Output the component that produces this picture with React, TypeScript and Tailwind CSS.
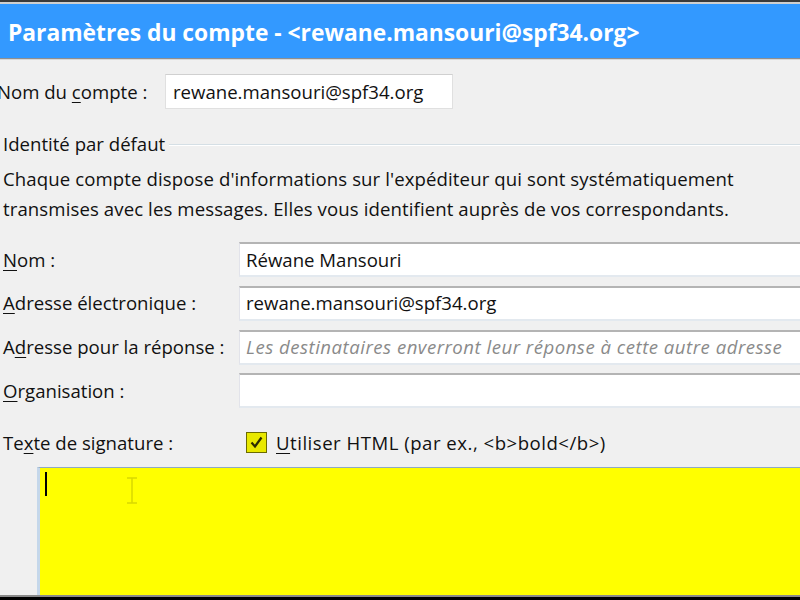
import React from "react";

const font = { fontFamily: '"Open Sans", "Noto Sans", "DejaVu Sans", sans-serif' };

function Field({ value, placeholder }: { value?: string; placeholder?: string }) {
  return (
    <div className="h-[35px] flex-1 bg-white border-t-2 border-t-[#b4b4b4] border-l border-l-[#e2e3ea] border-b-2 border-b-[#e3e9ef] flex items-center pl-[6px] overflow-hidden whitespace-nowrap">
      {value ? (
        <span className="text-[18.6px] text-[#111]">{value}</span>
      ) : (
        <span className="text-[18.6px] italic text-[#8a8a8a] tracking-[0.5px]">{placeholder}</span>
      )}
    </div>
  );
}

function Row({ u, rest, pre = "", children }: { u: string; rest: string; pre?: string; children: React.ReactNode }) {
  return (
    <div className="flex items-center h-[43.67px]">
      <div className="w-[239px] shrink-0 pl-[3px] text-[18.6px] text-[#111] whitespace-nowrap">
        {pre}
        <span className="underline underline-offset-[3px]">{u}</span>
        {rest}
      </div>
      {children}
    </div>
  );
}

export default function App() {
  return (
    <div className="w-[800px] h-[600px] overflow-hidden bg-[#f0f0f0] flex flex-col" style={font}>
      {/* window frame top edge */}
      <div className="h-[2px] bg-[#3a3a3a] shrink-0" />
      <div className="h-[2px] bg-[#cfcfcf] shrink-0" />
      {/* title bar */}
      <div className="h-[54px] bg-[#3399ff] shrink-0 flex items-center pl-[8px] pt-[4px]">
        <span className="text-white font-bold text-[22.8px] whitespace-nowrap">
          Paramètres du compte - &lt;rewane.mansouri@spf34.org&gt;
        </span>
      </div>
      <div className="h-[1px] bg-[#8f8f8f] shrink-0" />
      <div className="h-[1px] bg-[#d8d8d8] shrink-0" />

      {/* account name */}
      <div className="flex items-center mt-[14px] h-[35px] shrink-0">
        <div className="w-[168px] shrink-0 -ml-[3px] text-[18.6px] text-[#111] whitespace-nowrap">
          Nom du <span className="underline underline-offset-[3px]">c</span>ompte :
        </div>
        <div className="w-[288px] h-[35px] bg-white border border-[#e0e0e0] border-t-[#d0d0d0] flex items-center pl-[7px] text-[18.6px] text-[#111] whitespace-nowrap">
          rewane.mansouri@spf34.org
        </div>
      </div>

      {/* default identity group */}
      <div className="flex items-center mt-[21px] shrink-0">
        <span className="pl-[3px] text-[18.6px] text-[#111] whitespace-nowrap">Identité par défaut</span>
        <div className="flex-1 ml-[4px] mt-[2px] flex flex-col">
          <div className="h-[1px] bg-[#d5dfe5]" />
          <div className="h-[1px] bg-white" />
        </div>
      </div>
      <div className="pl-[3px] mt-[6px] text-[18.6px] leading-[30px] text-[#111] whitespace-nowrap shrink-0 tracking-[0.1px]">
        <div>Chaque compte dispose d'informations sur l'expéditeur qui sont systématiquement</div>
        <div>transmises avec les messages. Elles vous identifient auprès de vos correspondants.</div>
      </div>

      <div className="mt-[14px] flex flex-col shrink-0">
        <Row u="N" rest="om :">
          <Field value="Réwane Mansouri" />
        </Row>
        <Row u="A" rest="dresse électronique :">
          <Field value="rewane.mansouri@spf34.org" />
        </Row>
        <Row pre="A" u="d" rest="resse pour la réponse :">
          <Field placeholder="Les destinataires enverront leur réponse à cette autre adresse" />
        </Row>
        <Row u="O" rest="rganisation :">
          <Field />
        </Row>
      </div>

      {/* signature */}
      <div className="flex items-center h-[28px] mt-[16px] shrink-0">
        <div className="w-[246px] shrink-0 pl-[3px] text-[18.6px] text-[#111] whitespace-nowrap">
          Te<span className="underline underline-offset-[3px]">x</span>te de signature :
        </div>
        <div className="w-[21px] h-[21px] border border-[#6b6b00] bg-[#e8e800] flex items-center justify-center">
          <svg width="15" height="15" viewBox="0 0 15 15">
            <path d="M2.5 7.5 L6 11.5 L12.5 2.5" fill="none" stroke="#2b2b00" strokeWidth="2.2" />
          </svg>
        </div>
        <span className="ml-[9px] text-[18.6px] text-[#111] whitespace-nowrap tracking-[0.5px]">
          <span className="underline underline-offset-[3px]">U</span>tiliser HTML (par ex., &lt;b&gt;bold&lt;/b&gt;)
        </span>
      </div>

      <div className="flex-1 flex mt-[10px] ml-[37px] min-h-0">
        <div className="flex-1 flex flex-col border-t border-t-[#8fa9c3] border-l-[3px] border-l-[#c5d7ea] bg-[#ffff00] relative">
          <div className="absolute left-[5px] top-[4px] w-[2px] h-[24px] bg-black" />
          <svg className="absolute left-[86px] top-[9px]" width="12" height="27" viewBox="0 0 12 27">
            <path d="M1 1 H11 M6 1 V26 M1 26 H11" fill="none" stroke="#d9d900" strokeWidth="1.5" />
          </svg>
        </div>
      </div>
      <div className="h-[2px] bg-[#8a8a8a] shrink-0" />
      <div className="h-[3px] bg-black shrink-0" />
    </div>
  );
}
